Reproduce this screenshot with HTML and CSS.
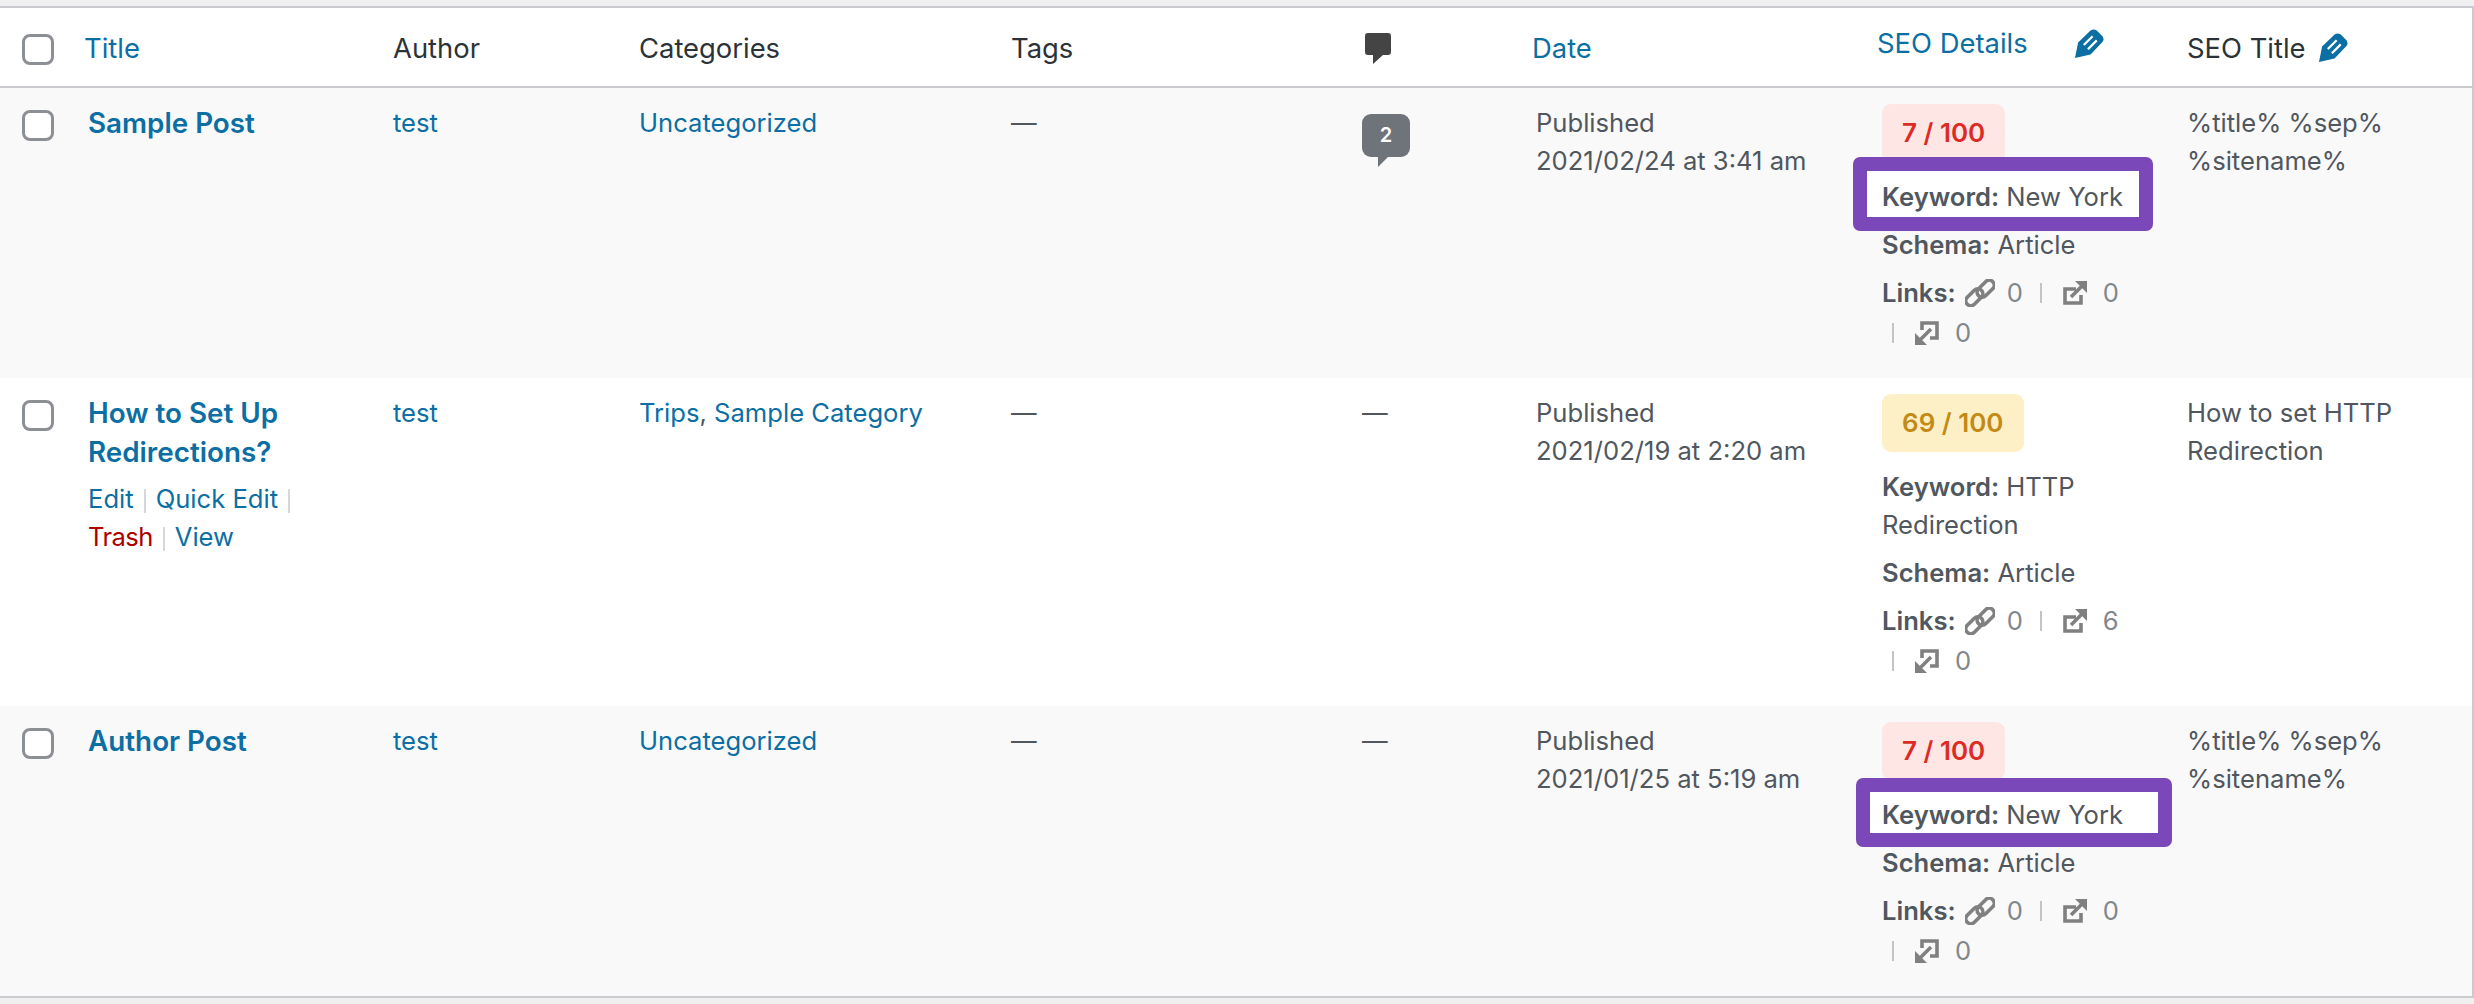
FILE: index.html
```html
<!DOCTYPE html>
<html lang="en">
<head>
<meta charset="utf-8">
<title>Posts</title>
<link rel="stylesheet" href="styles.css">
</head>
<body>
<svg class="defs" width="0" height="0" aria-hidden="true">
  <symbol id="i-pencil" viewBox="0 0 28 28">
    <path fill="#0b6fa4" d="M0 28 L3 13 L15 1.5 Q18 -0.5 21 1.5 L26.5 7 Q28.5 10 26.5 12.5 L15 24.5 Z"/>
    <path fill="none" stroke="#fff" stroke-width="2.2" d="M8.5 15.5 L17 7 M12.5 19.5 L21 11"/>
  </symbol>
  <symbol id="i-link" viewBox="0 0 30 28">
    <g transform="rotate(-45 15 14)" fill="none" stroke="#808080" stroke-width="3.6">
      <rect x="-2" y="8" width="20" height="10" rx="5"/>
      <rect x="12" y="10" width="20" height="10" rx="5"/>
    </g>
  </symbol>
  <symbol id="i-ext" viewBox="0 0 24 24">
    <path fill="none" stroke="#808080" stroke-width="3.6" d="M13 8 H2 V22 H18 V14"/>
    <path fill="none" stroke="#808080" stroke-width="3.6" d="M8 16 L20 4"/>
    <path fill="#808080" d="M12 0 H24 V12 Z"/>
  </symbol>
  <symbol id="i-int" viewBox="0 0 24 24">
    <path fill="none" stroke="#808080" stroke-width="3.6" d="M7 9 V2 H22 V17 H15"/>
    <path fill="none" stroke="#808080" stroke-width="3.6" d="M16 8 L4 20"/>
    <path fill="#808080" d="M0 12 V24 H12 Z"/>
  </symbol>
</svg>

<div class="wrap">
<table class="posts">
  <colgroup>
    <col class="c-check"><col class="c-title"><col class="c-author"><col class="c-cats"><col class="c-tags">
    <col class="c-comments"><col class="c-date"><col class="c-seo"><col class="c-seot">
  </colgroup>
  <thead>
    <tr>
      <th class="check-head"><span class="check"></span></th>
      <th class="sort"><a href="#">Title</a></th>
      <th>Author</th>
      <th>Categories</th>
      <th>Tags</th>
      <th class="comment-head">
        <svg class="comment-ico" viewBox="0 0 26 31" width="26" height="31"><path fill="#444" d="M3 0 H23 Q26 0 26 3 V19 Q26 22 23 22 H18 L8 31 V22 H3 Q0 22 0 19 V3 Q0 0 3 0 Z"/></svg>
      </th>
      <th class="sort"><a href="#">Date</a></th>
      <th class="sort seo-head">
        <div class="seo-head-in"><a href="#">SEO Details</a><svg class="pencil"><use href="#i-pencil"/></svg></div>
      </th>
      <th class="seot-head"><div class="seot-in">SEO Title<svg class="pencil"><use href="#i-pencil"/></svg></div></th>
    </tr>
  </thead>
  <tbody>
    <tr class="alt">
      <td class="check-cell"><span class="check"></span></td>
      <td class="title-cell"><a class="row-title" href="#">Sample Post</a></td>
      <td><a href="#">test</a></td>
      <td><a href="#">Uncategorized</a></td>
      <td>—</td>
      <td class="bubble-cell"><span class="bubble">2</span></td>
      <td>Published<br>2021/02/24 at 3:41 am</td>
      <td>
        <span class="score bad">7 / 100</span>
        <div class="kw"><span class="frame frame-a"></span><span class="kw-text"><b>Keyword:</b> New York</span></div>
        <div class="sch"><b>Schema:</b> Article</div>
        <div class="links">
          <b>Links:</b>
          <span class="li li-first"><svg class="ic-link"><use href="#i-link"/></svg><i>0</i></span>
          <span class="li"><u></u><svg class="ic"><use href="#i-ext"/></svg><i>0</i></span>
          <span class="li li-wrap"><u></u><svg class="ic"><use href="#i-int"/></svg><i>0</i></span>
        </div>
      </td>
      <td>%title% %sep%<br>%sitename%</td>
    </tr>
    <tr>
      <td class="check-cell"><span class="check"></span></td>
      <td class="title-cell">
        <a class="row-title" href="#">How to Set Up<br>Redirections?</a>
        <div class="actions"><a href="#">Edit</a><span class="sep"></span><a href="#">Quick Edit</a><span class="sep"></span></div>
        <div class="actions-b"><a class="trash" href="#">Trash</a><span class="sep"></span><a href="#">View</a></div>
      </td>
      <td><a href="#">test</a></td>
      <td><a href="#">Trips</a>, <a href="#">Sample Category</a></td>
      <td>—</td>
      <td>—</td>
      <td>Published<br>2021/02/19 at 2:20 am</td>
      <td>
        <span class="score ok">69 / 100</span>
        <div class="kw"><span class="kw-text"><b>Keyword:</b> HTTP<br>Redirection</span></div>
        <div class="sch"><b>Schema:</b> Article</div>
        <div class="links">
          <b>Links:</b>
          <span class="li li-first"><svg class="ic-link"><use href="#i-link"/></svg><i>0</i></span>
          <span class="li"><u></u><svg class="ic"><use href="#i-ext"/></svg><i>6</i></span>
          <span class="li li-wrap"><u></u><svg class="ic"><use href="#i-int"/></svg><i>0</i></span>
        </div>
      </td>
      <td>How to set HTTP<br>Redirection</td>
    </tr>
    <tr class="alt">
      <td class="check-cell"><span class="check"></span></td>
      <td class="title-cell"><a class="row-title" href="#">Author Post</a></td>
      <td><a href="#">test</a></td>
      <td><a href="#">Uncategorized</a></td>
      <td>—</td>
      <td>—</td>
      <td>Published<br>2021/01/25 at 5:19 am</td>
      <td>
        <span class="score bad">7 / 100</span>
        <div class="kw"><span class="frame frame-b"></span><span class="kw-text"><b>Keyword:</b> New York</span></div>
        <div class="sch"><b>Schema:</b> Article</div>
        <div class="links">
          <b>Links:</b>
          <span class="li li-first"><svg class="ic-link"><use href="#i-link"/></svg><i>0</i></span>
          <span class="li"><u></u><svg class="ic"><use href="#i-ext"/></svg><i>0</i></span>
          <span class="li li-wrap"><u></u><svg class="ic"><use href="#i-int"/></svg><i>0</i></span>
        </div>
      </td>
      <td>%title% %sep%<br>%sitename%</td>
    </tr>
  </tbody>
</table>
</div>
</body>
</html>
```
FILE: styles.css
```css
* { box-sizing: border-box; }
html, body { margin: 0; padding: 0; }
body {
  background: #f0f0f1;
  font-family: Inter, "Liberation Sans", sans-serif;
  font-size: 25.6px;
  line-height: 38px;
  color: #50575e;
  overflow: hidden;
}
.defs { position: absolute; }
a { color: #0b6fa4; text-decoration: none; }
b { font-weight: 600; }

.wrap {
  margin-top: 6px;
  width: 2474px;
  border-top: 2px solid #c9cbce;
  border-bottom: 2px solid #c9cbce;
  border-right: 2px solid #c9cbce;
}
.posts {
  width: 2472px;
  table-layout: fixed;
  border-collapse: separate;
  border-spacing: 0;
  background: #fff;
}
.c-check { width: 72px; }
.c-title { width: 305px; }
.c-author { width: 246px; }
.c-cats { width: 372px; }
.c-tags { width: 351px; }
.c-comments { width: 174px; }
.c-date { width: 346px; }
.c-seo { width: 305px; }
.c-seot { width: 301px; }

th {
  text-align: left;
  font-size: 27.4px;
  font-weight: 400;
  color: #2c3338;
  height: 80px;
  padding: 21px 0 19px 16px;
  border-bottom: 2px solid #c9cbce;
  vertical-align: top;
}
th.sort { padding-left: 12px; }
th.sort a { display: block; }
td {
  padding: 16px 16px 25px 16px;
  vertical-align: top;
}
.alt td { background: #f9f9f9; }

.check {
  display: block;
  width: 32px;
  height: 31px;
  background: #fff;
  border: 3px solid #8c8f94;
  border-radius: 8px;
}
.check-head { padding: 26px 0 0 22px; }
.check-cell { padding: 22px 0 0 22px; }

.title-cell { padding-left: 16px; }
.row-title {
  display: block;
  font-size: 27.8px;
  font-weight: 600;
  line-height: 39px;
}
.actions { margin-top: 8px; }
.trash { color: #a00; letter-spacing: -0.6px; }
.sep {
  display: inline-block;
  width: 2px;
  height: 24px;
  margin: 0 10px;
  background: #d5d7da;
  vertical-align: -5px;
}

.comment-head { padding: 25px 0 0 19px; }
.comment-ico { display: block; }
.bubble-cell { padding-top: 26px; }
.bubble {
  position: relative;
  display: block;
  width: 48px;
  height: 43px;
  border-radius: 9px;
  background: #6f747a;
  color: #fff;
  font-size: 20px;
  font-weight: 600;
  line-height: 43px;
  text-align: center;
}
.bubble::after {
  content: "";
  position: absolute;
  left: 16px;
  top: 43px;
  border-style: solid;
  border-width: 10px 10px 0 0;
  border-color: #6f747a transparent transparent transparent;
}

.seo-head { padding: 16px 0 24px 11px; }
th.seo-head { padding-left: 11px; }
.seo-head-in, .seot-in { display: flex; align-items: center; }
.seo-head-in .pencil { margin-left: 47px; }
.seot-head { padding: 21px 0 19px 16px; }
.seot-in .pencil { margin-left: 13px; margin-top: -2px; }
.pencil { width: 29px; height: 29px; flex: none; }

.score {
  display: inline-block;
  height: 58px;
  padding: 0 20px;
  border-radius: 9px;
  font-size: 26px;
  font-weight: 600;
  line-height: 58px;
  vertical-align: top;
}
.bad { background: #fde6e3; color: #dc2b26; }
.ok { background: #fdf0c7; color: #c48a17; }

.kw { position: relative; margin-top: 16px; }
.kw-text { position: relative; }
.frame {
  position: absolute;
  border: 14px solid #7b48b9;
  border-radius: 7px;
  background: #fff;
}
.frame-a { left: -29px; top: -21px; width: 300px; height: 74px; }
.frame-b { left: -26px; top: -18px; width: 316px; height: 69px; }
.sch { margin-top: 10px; }

.links {
  display: flex;
  flex-wrap: wrap;
  align-items: center;
  margin-top: 9px;
  margin-right: -16px;
  line-height: 40px;
}
.li { display: inline-flex; align-items: center; }
.li i { font-style: normal; color: #82878c; }
.li u {
  display: block;
  width: 2px;
  height: 20px;
  background: #c3c4c7;
}
.li-first { margin-left: 9px; }
.ic-link { width: 30px; height: 28px; margin-right: 12px; }
.ic { width: 24px; height: 24px; margin-left: 21px; margin-right: 16px; }
.li-first + .li { margin-left: 17px; }
.li-wrap { margin-left: 10px; }
```
